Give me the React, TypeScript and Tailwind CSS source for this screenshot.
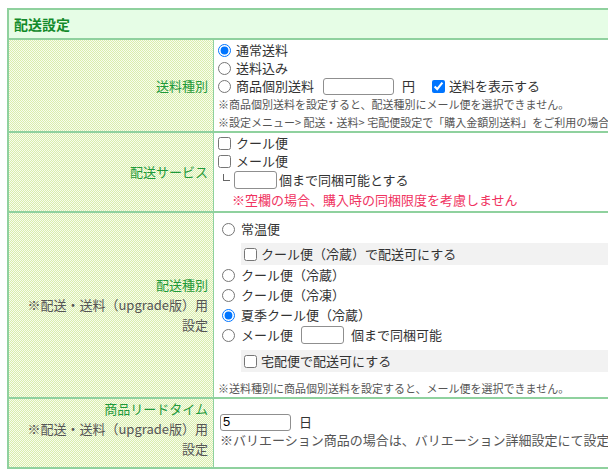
import React from 'react';

const pattern =
  'w-[205px] shrink-0 border-r border-[#8fd19e] [background-image:repeating-conic-gradient(#d9eeac_0_25%,#f8fcee_0_50%)] [background-size:2px_2px] flex flex-col items-end justify-center text-right pr-[5px]';

const textInput = 'h-[17px] border border-[#8f8f8f] rounded-[3px] bg-white px-[2px] text-[13px] text-black outline-none';

function Radio({ checked = false }: { checked?: boolean }) {
  return <input type="radio" defaultChecked={checked} className="w-[13px] h-[13px] shrink-0 accent-[#0075ff]" />;
}

function Check({ checked = false }: { checked?: boolean }) {
  return <input type="checkbox" defaultChecked={checked} className="w-[13px] h-[13px] shrink-0 accent-[#0075ff]" />;
}

export default function App() {
  return (
    <div className="w-[608px] h-[471px] overflow-hidden bg-white font-['Noto_Sans_CJK_JP',sans-serif] text-[13px] text-[#333]">
      <div className="ml-[7px] mt-[8px] w-[820px] border-2 border-[#8fd19e]">
        {/* header */}
        <div className="h-[30px] bg-[#e6fde6] pl-[5px] flex items-center font-bold text-[14px] text-[#138a2a] border-b-2 border-[#8fd19e]">
          配送設定
        </div>

        {/* 送料種別 */}
        <div className="flex h-[93px] border-b-2 border-[#8fd19e]">
          <div className={pattern}>
            <span className="text-[#1f9a3a] leading-[20px]">送料種別</span>
          </div>
          <div className="flex-1 pl-[4px] pt-[1px]">
            <label className="flex items-center h-[18px] leading-[18px]">
              <Radio checked />
              <span className="ml-[5px]">通常送料</span>
            </label>
            <label className="flex items-center h-[18px] leading-[18px]">
              <Radio />
              <span className="ml-[5px]">送料込み</span>
            </label>
            <div className="flex items-center h-[18px] leading-[18px]">
              <Radio />
              <span className="ml-[5px]">商品個別送料</span>
              <input type="text" className={`${textInput} ml-[9px] w-[71px]`} />
              <span className="ml-[8px]">円</span>
              <span className="ml-[17px] flex items-center">
                <Check checked />
                <span className="ml-[4px]">送料を表示する</span>
              </span>
            </div>
            <div className="h-[18px] leading-[18px] text-[11px] text-[#555] whitespace-nowrap">
              ※商品個別送料を設定すると、配送種別にメール便を選択できません。
            </div>
            <div className="h-[18px] leading-[18px] text-[11px] text-[#555] whitespace-nowrap">
              ※設定メニュー&gt; 配送・送料&gt; 宅配便設定で「購入金額別送料」をご利用の場合は、商品個別送料は設定できません。
            </div>
          </div>
        </div>

        {/* 配送サービス */}
        <div className="flex h-[80px] border-b-2 border-[#8fd19e]">
          <div className={pattern}>
            <span className="text-[#1f9a3a] leading-[20px]">配送サービス</span>
          </div>
          <div className="flex-1 pl-[4px] pt-[1px]">
            <label className="flex items-center h-[18px] leading-[18px]">
              <Check />
              <span className="ml-[5px]">クール便</span>
            </label>
            <label className="flex items-center h-[18px] leading-[18px]">
              <Check />
              <span className="ml-[5px]">メール便</span>
            </label>
            <div className="flex items-center h-[20px] leading-[20px]">
              <span className="ml-[5px] self-start mt-[4px] w-[7px] h-[7px] border-l border-b border-[#666]" />
              <input type="text" className={`${textInput} ml-[4px] w-[43px] h-[18px]`} />
              <span className="ml-[2px]">個まで同梱可能とする</span>
            </div>
            <div className="h-[19px] leading-[19px] pl-[14px] text-[#f0335f] whitespace-nowrap">
              ※空欄の場合、購入時の同梱限度を考慮しません
            </div>
          </div>
        </div>

        {/* 配送種別 */}
        <div className="flex h-[186px] border-b-2 border-[#8fd19e]">
          <div className={pattern}>
            <span className="text-[#1f9a3a] leading-[20px]">配送種別</span>
            <span className="text-[#555] leading-[20px]">
              ※配送・送料（upgrade版）用
              <br />
              設定
            </span>
          </div>
          <div className="flex-1 pl-[8px] pt-[6px]">
            <label className="flex items-center h-[20px] leading-[20px]">
              <Radio />
              <span className="ml-[6px]">常温便</span>
            </label>
            <div className="ml-[19px] mt-[4px] h-[22px] bg-[#f2f2f2] flex items-center pl-[3px]">
              <Check />
              <span className="ml-[4px]">クール便（冷蔵）で配送可にする</span>
            </div>
            <label className="flex items-center h-[20px] leading-[20px]">
              <Radio />
              <span className="ml-[6px]">クール便（冷蔵）</span>
            </label>
            <label className="flex items-center h-[20px] leading-[20px]">
              <Radio />
              <span className="ml-[6px]">クール便（冷凍）</span>
            </label>
            <label className="flex items-center h-[20px] leading-[20px]">
              <Radio checked />
              <span className="ml-[6px]">夏季クール便（冷蔵）</span>
            </label>
            <div className="flex items-center h-[20px] leading-[20px]">
              <Radio />
              <span className="ml-[6px]">メール便</span>
              <input type="text" className={`${textInput} ml-[8px] w-[43px] h-[18px]`} />
              <span className="ml-[7px]">個まで同梱可能</span>
            </div>
            <div className="ml-[19px] mt-[5px] h-[22px] bg-[#f2f2f2] flex items-center pl-[3px]">
              <Check />
              <span className="ml-[4px]">宅配便で配送可にする</span>
            </div>
            <div className="mt-[7px] -ml-[4px] h-[18px] leading-[18px] text-[11px] text-[#555] whitespace-nowrap">
              ※送料種別に商品個別送料を設定すると、メール便を選択できません。
            </div>
          </div>
        </div>

        {/* 商品リードタイム */}
        <div className="flex h-[68px]">
          <div className={`${pattern} !justify-start`}>
            <span className="text-[#1f9a3a] leading-[20px]">商品リードタイム</span>
            <span className="text-[#555] leading-[20px]">
              ※配送・送料（upgrade版）用
              <br />
              設定
            </span>
          </div>
          <div className="flex-1 pl-[6px] pt-[14px]">
            <div className="flex items-center h-[18px]">
              <input type="text" defaultValue="5" className={`${textInput} w-[71px] font-['Liberation_Sans',sans-serif]`} />
              <span className="ml-[8px]">日</span>
            </div>
            <div className="h-[18px] leading-[18px] text-[#555] whitespace-nowrap">
              ※バリエーション商品の場合は、バリエーション詳細設定にて設定してください。
            </div>
          </div>
        </div>
      </div>
    </div>
  );
}
